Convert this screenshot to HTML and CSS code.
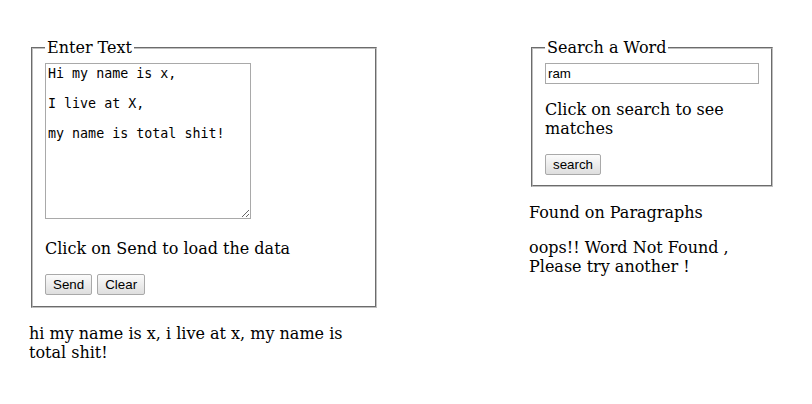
FILE: index.html
```html
<!DOCTYPE html>
<html>
<head>
<meta charset="utf-8">
<link rel="stylesheet" href="styles.css">
</head>
<body>
<div class="page">
  <div class="col col-left">
    <fieldset class="box">
      <legend class="box-title">Enter Text</legend>
      <div class="field"><textarea class="text-input">Hi my name is x,

I live at X,

my name is total shit!</textarea></div>
      <p class="hint">Click on Send to load the data</p>
      <div class="actions"><button class="btn">Send</button> <button class="btn">Clear</button></div>
    </fieldset>
    <p class="result">hi my name is x, i live at x, my name is total shit!</p>
  </div>
  <div class="col col-right">
    <fieldset class="box">
      <legend class="box-title">Search a Word</legend>
      <div class="field"><input class="word-input" type="text" value="ram"></div>
      <p class="hint">Click on search to see matches</p>
      <div class="actions"><button class="btn">search</button></div>
    </fieldset>
    <p class="result">Found on Paragraphs</p>
    <p class="result">oops!! Word Not Found , Please try another !</p>
  </div>
</div>
</body>
</html>
```
FILE: styles.css
```css
html, body {
  background: #fff;
}
body {
  margin: 8px;
  font-family: "DejaVu Serif", serif;
  font-size: 16px;
  color: #000;
}
.page {
  display: flex;
  align-items: flex-start;
  padding-top: 30px;
  padding-left: 21px;
}
.col-left {
  width: 350px;
}
.col-right {
  width: 246px;
  margin-left: 150px;
}
.box {
  margin: 0 2px;
  padding: 0.35em 0.75em 0.625em;
  border: 2px groove #c0c0c0;
}
.col-left .box {
  padding-bottom: 11px;
}
.box-title {
  padding: 0 2px;
}
.text-input {
  box-sizing: border-box;
  width: 206px;
  height: 156px;
  font-family: "DejaVu Sans Mono", monospace;
  font-size: 13.333px;
  border: 1px solid #a9a9a9;
  padding: 2px;
  margin: 0;
  resize: both;
}
.word-input {
  box-sizing: border-box;
  width: 100%;
  height: 21px;
  font-family: "Liberation Sans", Arial, sans-serif;
  font-size: 13.333px;
  border: 1px solid #a9a9a9;
  padding: 1px 2px;
  margin: 0;
}
.hint {
  margin: 16px 0;
}
.btn {
  font-family: "Liberation Sans", Arial, sans-serif;
  font-size: 13.333px;
  height: 21px;
  padding: 1px 7px;
  margin: 0;
  border: 1px solid #a9a9a9;
  border-radius: 2px;
  background: linear-gradient(#fbfbfb, #dedede);
  color: #000;
}
.result {
  margin: 16px 0;
}
```
